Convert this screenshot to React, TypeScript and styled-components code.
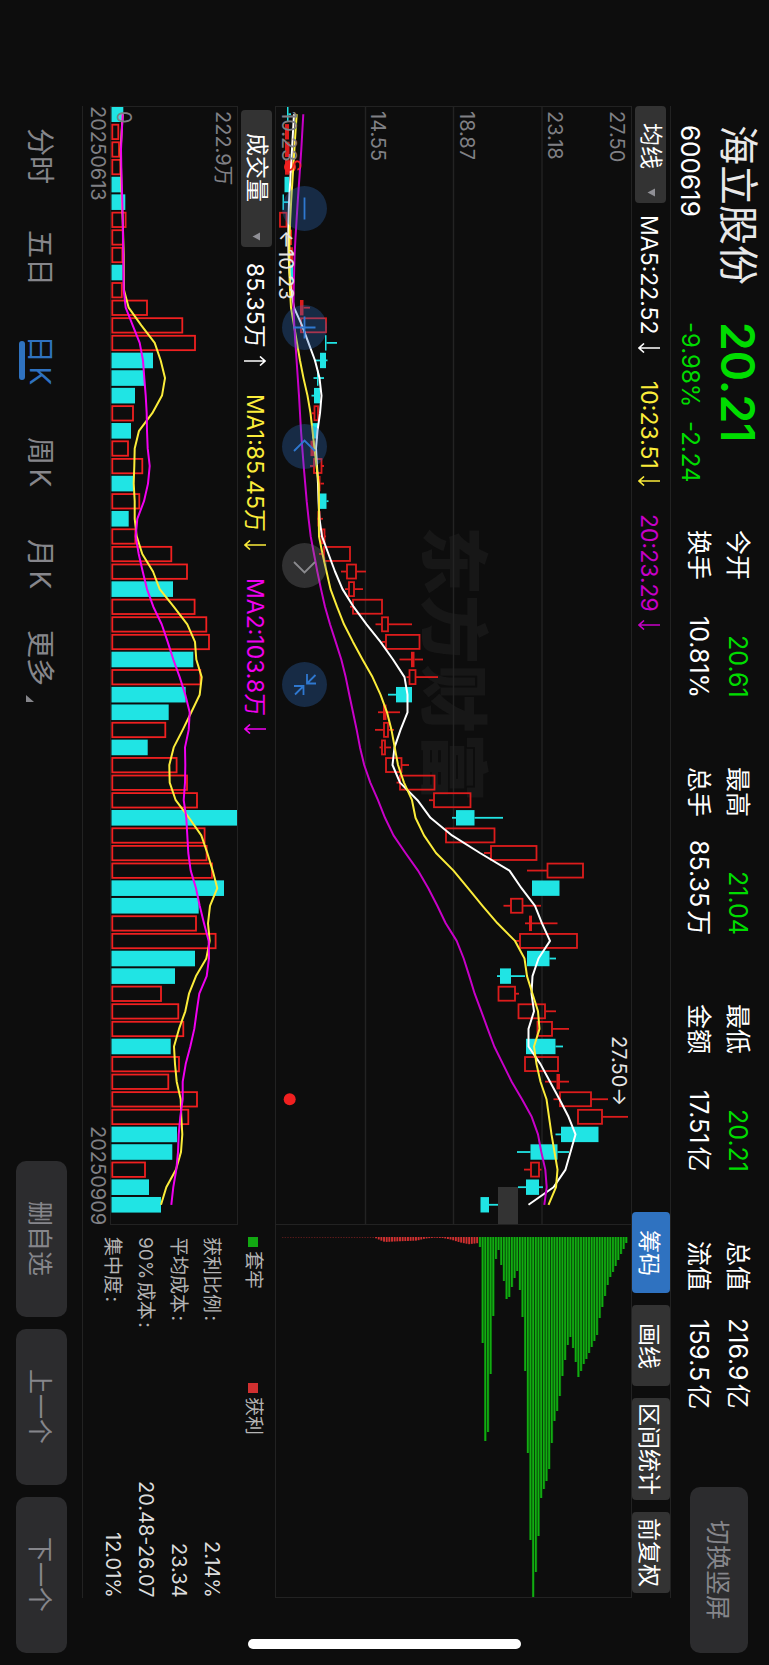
import React from "react";
import styled, { createGlobalStyle, css } from "styled-components";

const color = {
  page: "#0d0d0d",
  line: "#222222",
  chip: "#333333",
  button: "#2c2c2e",
  blue: "#2f72c0",
  text: "#ffffff",
  muted: "#86868b",
  axis: "#808085",
  red: "#f02020",
  cyan: "#20e4e4",
  green: "#00dc00",
  yellow: "#fbec3a",
  magenta: "#c800c8",
  pink: "#f000f0",
};

/* The app is held in landscape, so every line of text runs down the window
   and rows stack from the right edge to the left. */
const Global = createGlobalStyle`
  * { box-sizing: border-box; }
  html, body { margin: 0; background: ${color.page}; }
  body { font-family: Inter, "Noto Sans CJK SC", sans-serif; color: ${color.text}; }
  button, select { font-family: inherit; }
`;

const Screen = styled.main`
  position: relative;
  writing-mode: vertical-rl;
  text-orientation: sideways;
  display: flex;
  flex-direction: column;
  block-size: 100vw;
  inline-size: 100vh;
  white-space: nowrap;
  overflow: hidden;
  background: ${color.page};
`;

const vertical = css`
  writing-mode: vertical-rl;
  text-orientation: sideways;
`;

/* ---------- header ---------- */

const Header = styled.header`
  display: flex;
  flex: none;
  block-size: 98px;
  padding-inline: 125px 12px;
`;

const TitleBlock = styled.div<{ $length: number }>`
  display: flex;
  flex-direction: column;
  gap: 10px;
  inline-size: ${(p) => p.$length}px;
  padding-block-start: 7px;
`;

const StockName = styled.h1`
  margin: 0;
  font-size: 40px;
  font-weight: 400;
  line-height: 48px;
  color: #e8e8e8;
`;

const SubLine = styled.div<{ $tone?: string; $size: number }>`
  display: flex;
  gap: 14px;
  font-size: ${(p) => p.$size}px;
  line-height: 28px;
  color: ${(p) => p.$tone ?? color.text};
`;

const LastPrice = styled.div`
  font-size: 46px;
  font-weight: 600;
  line-height: 48px;
  color: ${color.green};
`;

const Quotes = styled.dl`
  display: grid;
  grid-template-columns: repeat(4, 168px);
  grid-template-rows: 38px 38px;
  grid-auto-flow: column;
  gap: 1px 69px;
  margin: 0;
  padding-block-start: 12px;
  text-autospace: normal;
`;

const Quote = styled.div`
  display: flex;
  justify-content: space-between;
  font-size: 25px;
  line-height: 38px;
  dt, dd { margin: 0; }
`;

const QuoteValue = styled.dd<{ $down?: boolean }>`
  color: ${(p) => (p.$down ? color.green : color.text)};
`;

const SoftButton = styled.button<{ $thick: number; $length: number }>`
  ${vertical}
  block-size: ${(p) => p.$thick}px;
  inline-size: ${(p) => p.$length}px;
  padding: 0;
  padding-block-end: 2px;
  border: 0;
  border-radius: 10px;
  background: ${color.button};
  color: ${color.muted};
  font-size: 25px;
  text-align: center;
`;

const HeaderAction = styled.div`
  margin-inline-start: auto;
  padding-block-start: 21px;
`;

/* ---------- body ---------- */

const Body = styled.section`
  display: flex;
  flex: 1;
  flex-direction: column;
  margin-inline: 106px 67px;
`;

const Bar = styled.div<{ $thick: number; $inset?: number; $ruled?: boolean }>`
  display: flex;
  flex: none;
  align-items: center;
  block-size: ${(p) => p.$thick}px;
  padding-inline-start: ${(p) => p.$inset ?? 0}px;
  border-block-start: ${(p) => (p.$ruled ? `1px solid ${color.line}` : "0")};
`;

const Picker = styled.label<{ $length: number; $pad: number; $gap: number }>`
  display: flex;
  align-items: center;
  flex: none;
  block-size: 31px;
  inline-size: ${(p) => p.$length}px;
  padding-inline: ${(p) => p.$pad}px 6px;
  border-radius: 4px;
  background: ${color.chip};
  margin-inline-end: ${(p) => p.$gap}px;
  margin-block-start: 1px;
`;

const PickerSelect = styled.select`
  ${vertical}
  appearance: none;
  flex: 1;
  min-inline-size: 0;
  block-size: 31px;
  padding: 0;
  padding-block-start: 1px;
  border: 0;
  background: transparent;
  color: ${color.text};
  font-size: 23px;
`;

const Caret = styled.svg`
  flex: none;
  width: 8px;
  height: 9px;
  pointer-events: none;
`;

const Legend = styled.span<{ $tone?: string }>`
  display: flex;
  align-items: center;
  gap: 8px;
  font-size: 23px;
  line-height: 34px;
  color: ${(p) => p.$tone ?? color.text};
  margin-inline-end: 28px;
  margin-block-start: 4px;
`;

const Trend = styled.svg`
  width: 22px;
  height: 10px;
  fill: none;
  stroke: currentColor;
  stroke-width: 1.6;
`;

const Tools = styled.div`
  display: flex;
  gap: 12px;
  margin-inline: auto 5px;
`;

const Tool = styled.button<{ $active?: boolean; $length: number }>`
  ${vertical}
  block-size: 38px;
  inline-size: ${(p) => p.$length}px;
  padding: 0;
  border: 0;
  border-radius: 4px;
  background: ${(p) => (p.$active ? color.blue : color.chip)};
  color: ${color.text};
  font-size: 23px;
  text-align: center;
`;

const Split = styled.div<{ $thick?: number }>`
  display: grid;
  grid-template-columns: 1119fr 373fr;
  grid-template-rows: minmax(0, 1fr);
  flex: ${(p) => (p.$thick ? "none" : "1")};
  ${(p) => p.$thick && `block-size: ${p.$thick}px;`}
`;

const Plot = styled.div<{ $joined?: boolean }>`
  position: relative;
  flex: 1;
  border: 1px solid ${color.line};
  ${(p) => p.$joined && "border-inline-start: 0;"}
`;

const Drawing = styled.svg`
  position: absolute;
  inset: 0;
  width: 100%;
  height: 100%;
`;

const Axis = styled.div<{ $rows: number }>`
  position: absolute;
  inset: 0;
  display: grid;
  grid-template-rows: repeat(${(p) => p.$rows}, 1fr);
  padding-inline-start: 4px;
  font-size: 20px;
  line-height: 25px;
  color: ${color.axis};
  pointer-events: none;
`;

const AxisBand = styled.div`
  display: flex;
  flex-direction: column;
  justify-content: flex-end;
`;

const AxisTop = styled.span`
  margin-block: 2px auto;
`;

const Note = styled.span<{ $along: string; $across: string; $tone?: string }>`
  position: absolute;
  inset-inline-start: ${(p) => p.$along};
  inset-block-start: ${(p) => p.$across};
  font-size: 20px;
  line-height: 24px;
  color: ${(p) => p.$tone ?? "#e6e6e6"};
`;

const Watermark = styled.span`
  position: absolute;
  inset-inline-start: 37.5%;
  inset-block-start: 39%;
  font-size: 69px;
  font-weight: 900;
  line-height: 80px;
  color: #171717;
`;

const Floating = styled.div`
  position: absolute;
  inset-inline-start: 79px;
  inset-block-end: 6px;
  display: flex;
  gap: 74px;
`;

const RoundButton = styled.button<{ $off?: boolean }>`
  display: grid;
  place-items: center;
  width: 45px;
  height: 45px;
  padding: 0;
  border: 0;
  border-radius: 50%;
  background: ${(p) => (p.$off ? "rgba(128, 128, 132, 0.3)" : "rgba(47, 114, 200, 0.3)")};
  color: ${(p) => (p.$off ? "#8a8a8e" : "#2f78d0")};
`;

const Stack = styled.div`
  display: flex;
  flex-direction: column;
  border-block-end: 1px solid ${color.line};
`;

const Dates = styled.div`
  display: flex;
  flex: none;
  justify-content: space-between;
  block-size: 27px;
  font-size: 20px;
  line-height: 25px;
  color: ${color.axis};
`;

const ChipStats = styled.div`
  display: flex;
  flex-direction: column;
  padding-inline-start: 12px;
  padding-block-start: 9px;
  border-block-end: 1px solid ${color.line};
`;

const ChipLegend = styled.div`
  display: grid;
  grid-template-columns: 146px 1fr;
  font-size: 19px;
  line-height: 26px;
  color: #b4b4b4;
  margin-block-end: 12px;
`;

const ChipKey = styled.span<{ $fill: string }>`
  display: flex;
  align-items: center;
  gap: 4px;
  &::before {
    content: "";
    width: 10px;
    height: 10px;
    background: ${(p) => p.$fill};
  }
`;

const FactList = styled.dl`
  margin: 0;
`;

const Fact = styled.div`
  display: flex;
  justify-content: space-between;
  line-height: 33px;
  text-autospace: normal;
  dt { font-size: 19px; color: #b4b4b4; }
  dd { margin: 0; font-size: 20px; color: #dcdcdc; }
`;

/* ---------- footer ---------- */

const Footer = styled.footer`
  display: flex;
  flex: none;
  align-items: center;
  justify-content: space-between;
  block-size: 82px;
  padding-inline: 105px 12px;
`;

const Periods = styled.nav`
  display: flex;
`;

const Period = styled.button<{ $active?: boolean }>`
  ${vertical}
  position: relative;
  display: flex;
  align-items: center;
  justify-content: center;
  gap: 8px;
  inline-size: 102px;
  block-size: 46px;
  padding: 0;
  padding-block-end: 2px;
  border: 0;
  background: transparent;
  color: ${(p) => (p.$active ? color.blue : color.muted)};
  font-size: 28px;
  text-autospace: normal;
  ${(p) =>
    p.$active &&
    css`
      &::after {
        content: "";
        position: absolute;
        inset-block-end: 1px;
        inset-inline-start: 32px;
        inline-size: 39px;
        block-size: 6px;
        border-radius: 3px;
        background: ${color.blue};
      }
    `}
`;

const Corner = styled.svg`
  align-self: flex-end;
  width: 8px;
  height: 7px;
  margin-block-end: 6px;
`;

const FooterActions = styled.div`
  display: flex;
  gap: 12px;
`;

const HomeIndicator = styled.div`
  position: absolute;
  inset-inline-end: 16px;
  inset-block: 248px;
  inline-size: 10px;
  border-radius: 5px;
  background: #ffffff;
`;

/* ---------- chart data, in plot units ---------- */

const STEP = 17.59;
const FIRST = 114.2;
const at = (i: number) => FIRST + STEP * i;

type Kind = "r" | "c" | "f"; /* rising outline, falling, flat rising */
type Candle = [Kind, number, number, number?, number?]; /* body, then wick ends */

const candles: Candle[] = [
  ["c", 287, 288.5, 287, 291], ["f", 285, 289], ["f", 285, 289.5], ["f", 285, 289.5],
  ["c", 284.5, 289, 284.5, 291], ["c", 282.5, 284, 282.5, 290], ["r", 279.5, 287], ["f", 288, 292],
  ["f", 288.5, 293], ["c", 289.5, 293], ["f", 290.5, 293], ["f", 300, 303.5, 300, 310],
  ["r", 300.5, 326.5], ["c", 325, 326.5, 325, 337], ["c", 320, 326, 314, 327.5], ["c", 317, 318.5, 313.5, 324],
  ["c", 314, 320, 311.5, 320], ["r", 314, 318.5, 312, 318.5], ["c", 312, 318], ["f", 310.5, 315],
  ["r", 313.5, 322, 310, 324], ["f", 318, 320.5, 318, 324], ["c", 320, 326.5, 319, 328.5], ["f", 317.5, 320.5, 317, 323],
  ["r", 321.5, 325, 318.5, 326], ["r", 323.5, 350.5, 319, 350.5], ["r", 346.5, 356.5, 341, 366], ["r", 348.5, 354.5, 345, 363],
  ["r", 352.5, 382.5, 350, 382.5], ["r", 381.5, 388.5, 375.5, 412], ["r", 385.5, 420, 382, 420], ["f", 411, 414.5, 399.5, 423],
  ["r", 409, 416, 406.5, 438], ["c", 396, 412, 388, 412], ["f", 383, 386.5, 378, 400], ["r", 383.5, 388.5, 375, 394],
  ["r", 381.5, 385.5, 379.5, 391], ["r", 385.5, 402, 385.5, 409], ["r", 399.5, 435, 396.5, 435], ["r", 433.5, 471, 429, 471],
  ["c", 456, 474.5, 452, 503], ["r", 445.5, 495], ["r", 490.5, 537, 484, 537], ["r", 547, 583.5, 527, 583.5],
  ["c", 532, 559.5], ["r", 510.5, 523, 503.5, 541], ["f", 529, 532, 525, 557.5], ["r", 519.5, 577.5, 515, 577.5],
  ["c", 527, 549.5, 527, 556], ["c", 500, 511, 497, 525], ["r", 498, 515.5, 498, 519], ["r", 518, 545.5, 518, 556],
  ["r", 537, 552.5, 537, 569], ["c", 526, 555.5, 526, 563], ["r", 524.5, 558.5], ["f", 556.5, 560, 545, 569],
  ["r", 559.5, 591.5, 553.5, 608], ["r", 577.5, 602.5, 577.5, 628], ["c", 561, 598.5, 555.5, 598.5], ["c", 530.5, 557.5, 517, 569],
  ["r", 530.5, 539.5, 524, 541.5], ["c", 526, 539, 518, 543], ["c", 480.5, 489, 480.5, 498],
];

const ma5 = [
  294, 293, 292, 291, 290, 289, 288.5, 288.3, 288.5, 289.5, 291, 294, 302, 308.5, 315, 319.5, 321.5, 320, 317.5, 316, 317,
  318, 318.5, 319.5, 322, 328.5, 335, 342.5, 353.5, 366.5, 380.5, 393, 404.5, 407.5, 407.5, 400.5, 394.5, 392.5, 400,
  417.5, 430.5, 452, 480, 509.5, 521.5, 535, 542, 550, 538.5, 532.5, 531.5, 534, 528.5, 528.5, 540.5, 550, 559.5, 568.5,
  575.5, 570.5, 565.5, 553.5, 528.5,
];
const ma10 = [
  296.7, 295.5, 294.4, 293.3, 292.2, 291.1, 290.2, 289.5, 289.3, 289.4, 290, 291, 294, 297, 300, 303.5, 307.5, 310.5,
  312.5, 314.5, 316.5, 318.7, 319, 318.8, 319, 322.5, 326.5, 330.5, 337, 344, 353, 362.5, 372.5, 380.5, 387, 391.5, 394.7,
  398, 404, 412, 415.5, 424, 436, 453.5, 468, 482.5, 497.5, 515, 524.5, 527, 532.5, 538, 539.5, 534, 536.5, 540.5, 546.5,
  549, 551.5, 554.5, 557.5, 556, 548.5,
];
const ma20 = [
  303.3, 302.3, 301.3, 300.1, 298.9, 297.7, 296.6, 295.5, 294.6, 294.1, 293.7, 293.5, 294.3, 295.4, 296.6, 297.8, 299,
  300, 301, 302.3, 303.7, 305.2, 306.7, 308.6, 310.7, 314, 317.3, 321, 325, 330, 335.7, 341.3, 345.7, 349.3, 353, 356.7,
  360, 364.2, 370.3, 378, 385, 393.5, 405.5, 418, 428.3, 437.3, 445.7, 456.7, 463.7, 469.3, 474.7, 481.3, 487.7, 494.3,
  503, 511.7, 522, 531.7, 538, 541.3, 545.3, 546.7, 544.3,
];

type Volume = [Kind, number];
const volumes: Volume[] = [
  ["c", 123.3], ["r", 119], ["r", 119.7], ["r", 121], ["c", 121], ["c", 125.3], ["r", 126.3], ["r", 123.5], ["r", 123],
  ["c", 122.5], ["r", 122.5], ["r", 147.7], ["r", 183], ["r", 195.7], ["c", 153], ["c", 144], ["c", 135], ["r", 133.7],
  ["c", 131], ["r", 128.7], ["r", 143], ["c", 133], ["r", 140], ["c", 128.7], ["r", 136], ["r", 172], ["r", 187.7],
  ["c", 173], ["r", 195.3], ["r", 207], ["r", 209.7], ["c", 193.3], ["r", 201], ["c", 185.7], ["c", 168.7], ["r", 166],
  ["c", 147.7], ["r", 177.3], ["r", 187.7], ["r", 197.7], ["c", 237], ["r", 205.3], ["r", 207.3], ["r", 212.7],
  ["c", 224], ["c", 198.7], ["r", 196.7], ["r", 216.3], ["c", 195], ["c", 175], ["r", 161.7], ["r", 179], ["r", 184],
  ["c", 170.7], ["r", 179.7], ["r", 169], ["r", 197.7], ["r", 189], ["c", 177], ["c", 172.3], ["r", 145.7], ["c", 149],
  ["c", 161],
];
const volumeMa1 = [
  122.7, 121.6, 120.7, 121, 121.3, 122, 122.7, 123.2, 123.7, 123.8, 124, 128.7, 141.3, 154.7, 160.7, 165, 162, 152.3, 139,
  134.7, 134.3, 133.7, 134.7, 134.7, 136.7, 142.3, 153, 159.7, 173.7, 187.3, 195, 196.3, 201.7, 199.7, 191.3, 182.7,
  173.7, 169.3, 169.7, 175.7, 189, 201.3, 207.3, 212.7, 217.3, 210, 208, 209.7, 206.3, 196, 189, 185.3, 179, 174, 175,
  176.7, 180.7, 181.3, 182.3, 181, 176, 166.3, 161,
];
const volumeMa2 = [
  122.7, 121.8, 121, 121.3, 121.8, 122.3, 122.7, 123, 123.3, 123.5, 123.7, 125.7, 132.7, 139.7, 143, 144.3, 145.7, 146.7,
  147, 147.7, 149.7, 148, 144, 137.3, 135.7, 138.7, 142.7, 147, 153.3, 161.7, 167.7, 173.3, 179.7, 185.3, 189.7, 188.7,
  185, 185.3, 185, 183.7, 186.3, 187.3, 188.3, 190.7, 196, 199.7, 204, 208.7, 209, 206.7, 199.3, 196.7, 194.3, 190.3,
  185.7, 182.7, 182.7, 180.3, 178.7, 178, 176.3, 173.3, 171.3,
];

/* Shares held at each price step above the last price. */
const trapped = [
  10, 106, 204, 195, 137, 79, 22, 13, 28, 44, 62, 60, 50, 41, 34, 53, 80, 134, 216, 303, 360, 335, 299, 261, 252, 244,
  232, 206, 184, 174, 159, 139, 123, 108, 100, 111, 125, 140, 134, 127, 122, 116, 110, 104, 98, 81, 70, 59, 48, 40, 35,
  29, 23, 17, 12, 6,
];
/* Shares in profit: [step, depth] knots. */
const profitKnots = [
  [282, 0.6], [374, 0.8], [380, 3.5], [384, 5], [395, 4.4], [416, 3.6], [424, 1.6], [433, 0.7], [442, 1], [450, 2.6],
  [459, 5.4], [468, 7.2], [478, 6],
];
const profitDepth = (v: number) => {
  const n = profitKnots.findIndex(([x]) => x >= v);
  if (n <= 0) return profitKnots[0][1];
  const [x0, d0] = profitKnots[n - 1];
  const [x1, d1] = profitKnots[n];
  return d0 + ((d1 - d0) * (v - x0)) / (x1 - x0);
};
const profit = Array.from({ length: 74 }, (_, i) => 282 + i * 2.66);

const Line = ({ data, stroke }: { data: number[]; stroke: string }) => (
  <polyline
    points={data.map((v, i) => `${v},${at(i).toFixed(1)}`).join(" ")}
    fill="none"
    stroke={stroke}
    strokeWidth={2}
    strokeLinejoin="round"
  />
);

const PriceDrawing = () => (
  <Drawing viewBox="276 107 355 1117" preserveAspectRatio="none" role="img" aria-label="日K">
    {[365.5, 453.5, 542].map((x) => (
      <line key={x} x1={x} x2={x} y1={107} y2={1224} stroke="#232323" strokeWidth={1.4} />
    ))}
    <rect x={498} y={1187} width={20} height={38} fill={color.chip} />
    {candles.map(([kind, low, high, from = low, to = high], i) => {
      const stroke = kind === "c" ? color.cyan : "#dc1c1c";
      return (
        <g key={i} stroke={stroke} strokeWidth={1.8}>
          {from < low && <line x1={from} x2={low} y1={at(i)} y2={at(i)} />}
          {to > high && <line x1={high} x2={to} y1={at(i)} y2={at(i)} />}
          {kind === "r" ? (
            <rect x={low + 0.5} y={at(i) - 7} width={high - low - 1} height={14} fill="none" />
          ) : (
            <rect x={low} y={at(i) - 7.7} width={high - low} height={15.4} fill={stroke} stroke="none" />
          )}
        </g>
      );
    })}
    <circle cx={290} cy={167} r={6} fill={color.red} />
    <circle cx={289.7} cy={1099.3} r={6} fill={color.red} />
    <Line data={ma5} stroke="#ffffff" />
    <Line data={ma10} stroke={color.yellow} />
    <Line data={ma20} stroke={color.magenta} />
  </Drawing>
);

const VolumeDrawing = () => (
  <Drawing viewBox="111 107 126 1117" preserveAspectRatio="none" role="img" aria-label="成交量">
    {volumes.map(([kind, end], i) =>
      kind === "c" ? (
        <rect key={i} x={111.5} y={at(i) - 7.8} width={end - 111.5} height={15.6} fill={color.cyan} />
      ) : (
        <rect
          key={i}
          x={112.3}
          y={at(i) - 7.1}
          width={end - 113}
          height={14.4}
          fill="none"
          stroke={color.red}
          strokeWidth={1.8}
        />
      ),
    )}
    <Line data={volumeMa1} stroke={color.yellow} />
    <Line data={volumeMa2} stroke={color.pink} />
  </Drawing>
);

const ChipDrawing = () => (
  <Drawing viewBox="276 1225 355 372" preserveAspectRatio="none" role="img" aria-label="筹码">
    {profit.map((x) => (
      <rect
        key={x}
        x={x}
        y={1237}
        width={x < 374 ? 1.4 : 1.9}
        height={profitDepth(x)}
        fill="#d03030"
        opacity={x < 374 ? 0.6 : 1}
      />
    ))}
    {trapped.map((depth, i) => (
      <g key={i}>
        <rect x={478.7 + i * 2.66} y={1237} width={2.7} height={depth} fill="#085008" />
        <rect x={479.1 + i * 2.66} y={1237} width={1.7} height={depth} fill="#12ac12" />
      </g>
    ))}
  </Drawing>
);

const CaretIcon = () => (
  <Caret viewBox="0 0 8 9" aria-hidden="true">
    <path d="M8 0.5v8L0.5 4.5z" fill="#909096" />
  </Caret>
);

const Glyph = ({ d }: { d: string }) => (
  <svg width="45" height="45" viewBox="0 0 45 45" fill="none" stroke="currentColor" strokeWidth="1.8" aria-hidden="true">
    <path d={d} />
  </svg>
);

const Reading = ({ text, up, tone }: { text: string; up?: boolean; tone?: string }) => (
  <Legend $tone={tone}>
    {text}
    <Trend viewBox="0 0 22 10" role="img" aria-label={up ? "↑" : "↓"}>
      <path d={up ? "M0 5H21M16 0.5L21 5L16 9.5" : "M22 5H1M6 0.5L1 5L6 9.5"} />
    </Trend>
  </Legend>
);

const quotes: [string, string, boolean?][] = [
  ["今开", "20.61", true], ["换手", "10.81%"],
  ["最高", "21.04", true], ["总手", "85.35万"],
  ["最低", "20.21", true], ["金额", "17.51亿"],
  ["总值", "216.9亿"], ["流值", "159.5亿"],
];

const facts = [
  ["获利比例:", "2.14%"],
  ["平均成本:", "23.34"],
  ["90%成本:", "20.48-26.07"],
  ["集中度:", "12.01%"],
];

const controls = [
  { label: "缩小", d: "M22.5 11.5v22" },
  { label: "放大", d: "M22.5 11.5v22M11.5 22.5h22" },
  { label: "左移", d: "M12 27L22.5 16.5L33 27" },
  { label: "右移", d: "M12 19L22.5 29.5L33 19", off: true },
  { label: "还原", d: "M25 12v9.5h9M25 21.5L33.5 13M12 24h9.5v9M21.5 24L13 32.5" },
];

const periods = ["分时", "五日", "日K", "周K", "月K"];

export default function App() {
  return (
    <>
      <Global />
      <Screen lang="zh-CN">
        <Header>
          <TitleBlock $length={197}>
            <StockName>海立股份</StockName>
            <SubLine $size={26}>600619</SubLine>
          </TitleBlock>
          <TitleBlock $length={208}>
            <LastPrice>20.21</LastPrice>
            <SubLine $size={24} $tone={color.green}>
              <span>-9.98%</span>
              <span>-2.24</span>
            </SubLine>
          </TitleBlock>
          <Quotes>
            {quotes.map(([label, value, down]) => (
              <Quote key={label}>
                <dt>{label}</dt>
                <QuoteValue $down={down}>{value}</QuoteValue>
              </Quote>
            ))}
          </Quotes>
          <HeaderAction>
            <SoftButton $thick={58} $length={166}>切换竖屏</SoftButton>
          </HeaderAction>
        </Header>

        <Body>
          <Bar $thick={39} $ruled>
            <Picker $length={97} $pad={17} $gap={12}>
              <PickerSelect aria-label="主图指标">
                <option>均线</option>
              </PickerSelect>
              <CaretIcon />
            </Picker>
            <Reading text="MA5:22.52" />
            <Reading text="10:23.51" tone={color.yellow} />
            <Reading text="20:23.29" tone={color.magenta} />
            <Tools>
              <Tool $length={81} $active>筹码</Tool>
              <Tool $length={81}>画线</Tool>
              <Tool $length={102}>区间统计</Tool>
              <Tool $length={81}>前复权</Tool>
            </Tools>
          </Bar>

          <Split>
            <Plot>
              <Watermark aria-hidden="true">东方财富</Watermark>
              <PriceDrawing />
              <Axis $rows={4}>
                <AxisBand>
                  <AxisTop>27.50</AxisTop>
                  <span>23.18</span>
                </AxisBand>
                <AxisBand>18.87</AxisBand>
                <AxisBand>14.55</AxisBand>
                <AxisBand>10.23</AxisBand>
              </Axis>
              <Note $along="83.2%" $across="0">27.50→</Note>
              <Note $along="11%" $across="93.8%">←10.23</Note>
              <Note $along="4.7%" $across="91.7%" $tone={color.red}>S</Note>
              <Floating>
                {controls.map((c) => (
                  <RoundButton key={c.label} aria-label={c.label} $off={c.off} disabled={c.off}>
                    <Glyph d={c.d} />
                  </RoundButton>
                ))}
              </Floating>
            </Plot>
            <Plot $joined>
              <ChipDrawing />
            </Plot>
          </Split>

          <Split $thick={193}>
            <Stack>
              <Bar $thick={37} $inset={4}>
                <Picker $length={137} $pad={23} $gap={16}>
                  <PickerSelect aria-label="副图指标">
                    <option>成交量</option>
                  </PickerSelect>
                  <CaretIcon />
                </Picker>
                <Reading text="85.35万" up />
                <Reading text="MA1:85.45万" tone={color.yellow} />
                <Reading text="MA2:103.8万" tone={color.pink} />
              </Bar>
              <Plot>
                <VolumeDrawing />
                <Axis $rows={1}>
                  <AxisBand>
                    <AxisTop>222.9万</AxisTop>
                    <span>0</span>
                  </AxisBand>
                </Axis>
              </Plot>
              <Dates>
                <time dateTime="2025-06-13">20250613</time>
                <time dateTime="2025-09-09">20250909</time>
              </Dates>
            </Stack>
            <ChipStats>
              <ChipLegend>
                <ChipKey $fill="#12a812">套牢</ChipKey>
                <ChipKey $fill="#d03030">获利</ChipKey>
              </ChipLegend>
              <FactList>
                {facts.map(([label, value]) => (
                  <Fact key={label}>
                    <dt>{label}</dt>
                    <dd>{value}</dd>
                  </Fact>
                ))}
              </FactList>
            </ChipStats>
          </Split>
        </Body>

        <Footer>
          <Periods>
            {periods.map((p) => (
              <Period key={p} $active={p === "日K"}>{p}</Period>
            ))}
            <Period>
              更多
              <Corner viewBox="0 0 8 7" aria-hidden="true">
                <path d="M0 0v7h8z" fill="#86868b" />
              </Corner>
            </Period>
          </Periods>
          <FooterActions>
            <SoftButton $thick={51} $length={156}>删自选</SoftButton>
            <SoftButton $thick={51} $length={156}>上一个</SoftButton>
            <SoftButton $thick={51} $length={156}>下一个</SoftButton>
          </FooterActions>
        </Footer>
        <HomeIndicator />
      </Screen>
    </>
  );
}
